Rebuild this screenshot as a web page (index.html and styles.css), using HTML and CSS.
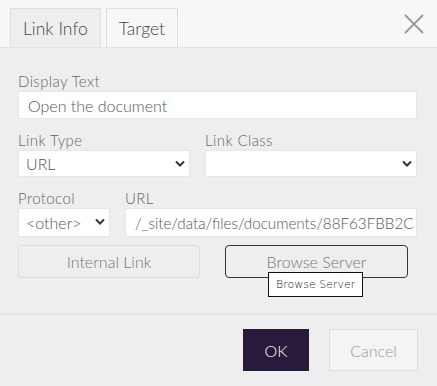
FILE: index.html
```html
<!DOCTYPE html>
<html lang="en">
<head>
    <meta charset="UTF-8">
    <meta name="viewport" content="width=device-width, initial-scale=1.0">
    <title>Link</title>
    <link rel="stylesheet" href="styles.css">
</head>
<body>
    <div class="dialog">
        <div class="dialog-header">
            <div class="tab active">Link Info</div>
            <div class="tab">Target</div>
            <button class="close-btn" aria-label="Close">
                <svg width="20" height="20" viewBox="0 0 20 20">
                    <path d="M1 1 L19 19 M19 1 L1 19" stroke="#999" stroke-width="1.8" fill="none"/>
                </svg>
            </button>
        </div>

        <div class="dialog-body">
            <div class="field">
                <label>Display Text</label>
                <div class="input">Open the document</div>
            </div>

            <div class="row">
                <div class="field link-type">
                    <label>Link Type</label>
                    <div class="input select">URL
                        <svg class="chevron" width="10" height="7" viewBox="0 0 10 7"><path d="M1 1.5 L5 5.5 L9 1.5" stroke="#333" stroke-width="2" fill="none"/></svg>
                    </div>
                </div>
                <div class="field grow">
                    <label>Link Class</label>
                    <div class="input select">
                        <svg class="chevron" width="10" height="7" viewBox="0 0 10 7"><path d="M1 1.5 L5 5.5 L9 1.5" stroke="#333" stroke-width="2" fill="none"/></svg>
                    </div>
                </div>
            </div>

            <div class="row">
                <div class="field protocol">
                    <label>Protocol</label>
                    <div class="input select tall">&lt;other&gt;
                        <svg class="chevron" width="10" height="7" viewBox="0 0 10 7"><path d="M1 1.5 L5 5.5 L9 1.5" stroke="#333" stroke-width="2" fill="none"/></svg>
                    </div>
                </div>
                <div class="field grow">
                    <label>URL</label>
                    <div class="input tall clip">/_site/data/files/documents/88F63FBB2C</div>
                </div>
            </div>

            <div class="row buttons">
                <button class="btn">Internal Link</button>
                <div class="browse-wrap">
                    <button class="btn focused">Browse Server</button>
                    <div class="tooltip">Browse Server</div>
                </div>
            </div>
        </div>

        <div class="dialog-footer">
            <button class="btn-ok">OK</button>
            <button class="btn-cancel">Cancel</button>
        </div>
    </div>
</body>
</html>
```

FILE: styles.css
```css
body {
    margin: 0;
    background-color: #eeeeee;
    font-family: Lato, "Liberation Sans", sans-serif;
    font-weight: 300;
    color: #777;
}
.dialog {
    width: 437px;
    height: 386px;
    background-color: #eeeeee;
}
.dialog-header {
    height: 48px;
    background-color: #f7f7f7;
    border-bottom: 1px solid #e3e3e3;
    display: flex;
    align-items: flex-end;
    padding-left: 10px;
    box-sizing: border-box;
    gap: 5px;
    position: relative;
}
.tab {
    height: 39px;
    box-sizing: border-box;
    border: 1px solid #dedede;
    border-bottom: none;
    padding: 0 12px;
    font-size: 17.5px;
    color: #444;
    display: flex;
    align-items: center;
    background-color: #f7f7f7;
}
.tab.active {
    background-color: #eeeeee;
}
.close-btn {
    position: absolute;
    right: 13px;
    top: 14px;
    border: none;
    background: none;
    padding: 0;
    width: 20px;
    height: 20px;
}
.dialog-body {
    padding: 23px 20px 0 18px;
    height: 267px;
    box-sizing: border-box;
    border-bottom: 2px solid #e4e4e4;
}
.field {
    display: flex;
    flex-direction: column;
    margin-bottom: 11px;
}
.field label {
    font-size: 15px;
    letter-spacing: 0.4px;
    line-height: 20px;
    color: #666;
}
.input {
    height: 28px;
    box-sizing: border-box;
    background: #fff;
    border: 1px solid #e6e6e6;
    font-size: 16px;
    color: #555;
    padding: 0 9px;
    display: flex;
    align-items: center;
    position: relative;
}
.input.select {
    height: 27px;
    padding-left: 7px;
}
.input.tall {
    height: 29px;
}
.input.clip {
    overflow: hidden;
    white-space: nowrap;
    padding-left: 9px;
    font-size: 15.2px;
}
.chevron {
    position: absolute;
    right: 4px;
    top: 9px;
}
.row {
    display: flex;
    gap: 15px;
}
.grow {
    flex: 1;
    min-width: 0;
}
.link-type {
    width: 172px;
    flex-shrink: 0;
}
.protocol {
    width: 92px;
    flex-shrink: 0;
}
.buttons {
    gap: 25px;
    padding-right: 9px;
    margin-top: -3px;
}
.btn {
    height: 33px;
    width: 183px;
    box-sizing: border-box;
    background-color: #eeeeee;
    border: 1px solid #dcdcdc;
    border-radius: 3px;
    font-family: Lato, "Liberation Sans", sans-serif;
    font-weight: 300;
    font-size: 16px;
    color: #777;
}
.btn.focused {
    border-color: #3a3243;
    border-radius: 4px;
}
.browse-wrap {
    position: relative;
}
.tooltip {
    position: absolute;
    left: 43px;
    top: 27px;
    background: #fff;
    border: 1px solid #111;
    font-family: "DejaVu Sans", sans-serif;
    font-size: 11px;
    color: #222;
    padding: 5px 7px 5px;
    white-space: nowrap;
}
.dialog-footer {
    display: flex;
    justify-content: flex-end;
    gap: 20px;
    padding: 14px 19px 0 0;
}
.btn-ok {
    width: 66px;
    height: 42px;
    background-color: #29193a;
    border: none;
    color: #fff;
    font-family: Lato, "Liberation Sans", sans-serif;
    font-weight: 300;
    font-size: 16px;
}
.btn-cancel {
    width: 89px;
    height: 42px;
    background-color: #f4f4f4;
    border: 1px solid #dcdcdc;
    color: #999;
    font-family: Lato, "Liberation Sans", sans-serif;
    font-weight: 300;
    font-size: 16px;
}
```
